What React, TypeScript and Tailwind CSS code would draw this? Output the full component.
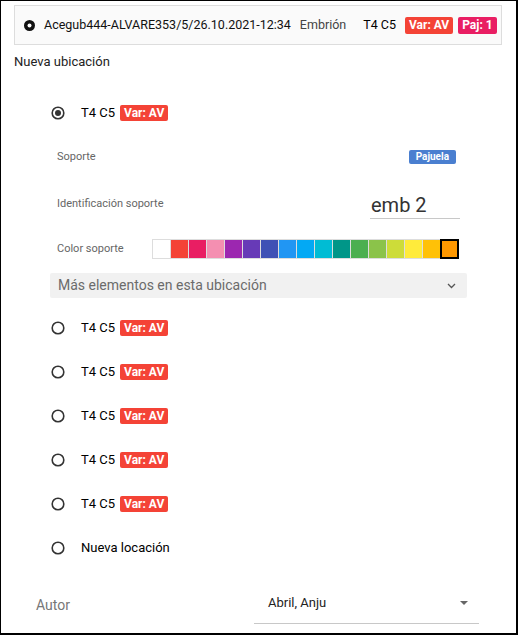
import React from "react";

const swatches = [
  "#ffffff", "#f44336", "#e91e63", "#f48fb1", "#9c27b0", "#673ab7", "#3f51b5", "#2196f3",
  "#03a9f4", "#00bcd4", "#009688", "#4caf50", "#8bc34a", "#cddc39", "#ffeb3b", "#ffc107", "#ff9800",
];

function Radio({ checked }: { checked?: boolean }) {
  return (
    <svg width="14" height="14" viewBox="0 0 14 14" className="shrink-0">
      <circle cx="7" cy="7" r="5.8" fill="none" stroke="#333" strokeWidth="1.6" />
      {checked && <circle cx="7" cy="7" r="3" fill="#333" />}
    </svg>
  );
}

function VarBadge() {
  return (
    <span className="bg-[#f44336] text-white text-[12px] font-bold leading-[16px] px-[4px] rounded-[2px]">
      Var: AV
    </span>
  );
}

function LocationRow({ checked }: { checked?: boolean }) {
  return (
    <div className="h-[44px] flex items-center pl-[1px]">
      <Radio checked={checked} />
      <span className="ml-[16px] text-[13px] text-black">T4 C5</span>
      <span className="ml-[5px] flex">
        <VarBadge />
      </span>
    </div>
  );
}

export default function App() {
  return (
    <div className="w-[518px] h-[635px] bg-white border border-black border-r-2 border-b-2 font-['Roboto',sans-serif] overflow-hidden">
      {/* Cabecera */}
      <div className="ml-[13px] mt-[4px] w-[488px] h-[40px] border border-[#dddddd] bg-[#fafafa] flex items-center pl-[9px] whitespace-nowrap">
        <svg width="11" height="11" viewBox="0 0 11 11" className="shrink-0">
          <circle cx="5.5" cy="5.5" r="5.5" fill="#111" />
          <circle cx="5.5" cy="5.5" r="2" fill="#fff" />
        </svg>
        <span className="ml-[9px] text-[12.5px] text-[#111]">Acegub444-ALVARE353/5/26.10.2021-12:34</span>
        <span className="ml-[9px] text-[12.5px] text-[#444]">Embrión</span>
        <span className="ml-[17px] text-[12.5px] text-black">T4 C5</span>
        <span className="ml-[9px] bg-[#f44336] text-white text-[12px] font-bold leading-[17px] px-[4px] rounded-[2px]">Var: AV</span>
        <span className="ml-[5px] bg-[#e91e63] text-white text-[12px] font-bold leading-[17px] px-[4px] rounded-[2px]">Paj: 1</span>
      </div>

      <div className="ml-[13px] mt-[8px] h-[18px] text-[13px] leading-[18px] text-[#222]">Nueva ubicación</div>

      <div className="ml-[49px] w-[417px] mt-[20px]">
        <LocationRow checked />

        <div className="h-[44px] flex items-center justify-between pl-[7px] pr-[11px]">
          <span className="text-[11px] text-[#666]">Soporte</span>
          <span className="bg-[#4a7fd0] text-white text-[10px] font-bold leading-[14px] px-[7px] rounded-[2px]">Pajuela</span>
        </div>

        <div className="h-[50px] flex items-center justify-between pl-[7px] pr-[7px]">
          <span className="text-[11px] text-[#666]">Identificación soporte</span>
          <div className="w-[90px] h-[30px] border-b border-[#c8c8c8] flex items-center pl-[1px] pt-[3px]">
            <span className="text-[20px] text-[#333]">emb 2</span>
          </div>
        </div>

        <div className="h-[40px] flex items-center pl-[7px]">
          <span className="w-[95px] text-[11px] text-[#666]">Color soporte</span>
          <div className="flex">
            {swatches.map((c, i) => (
              <div
                key={c}
                className={
                  i === swatches.length - 1
                    ? "w-[19px] h-[20px] border-2 border-black -ml-[1px] relative"
                    : i === 0
                    ? "w-[19px] h-[20px] border border-[#dddddd]"
                    : "w-[19px] h-[20px] border border-[#dddddd] -ml-[1px]"
                }
                style={{ backgroundColor: c }}
              />
            ))}
          </div>
        </div>

        <div className="mt-[4px] h-[25px] bg-[#f1f1f1] rounded-[2px] flex items-center justify-between pl-[8px] pr-[11px]">
          <span className="text-[14px] text-[#6b6b6b]">Más elementos en esta ubicación</span>
          <svg width="9" height="6" viewBox="0 0 9 6">
            <path d="M1 1 L4.5 4.5 L8 1" fill="none" stroke="#555" strokeWidth="1.3" />
          </svg>
        </div>

        <div className="mt-[8px]">
          <LocationRow />
          <LocationRow />
          <LocationRow />
          <LocationRow />
          <LocationRow />
          <div className="h-[44px] flex items-center pl-[1px]">
            <Radio />
            <span className="ml-[16px] text-[13px] text-black">Nueva locación</span>
          </div>
        </div>
      </div>

      <div className="ml-[35px] mt-[16px] flex items-center">
        <span className="w-[218px] text-[14px] text-[#777]">Autor</span>
        <div className="w-[225px] h-[38px] border-b border-[#c8c8c8] flex items-center justify-between pl-[14px] pr-[11px] pb-[3px]">
          <span className="text-[13px] text-[#222]">Abril, Anju</span>
          <svg width="8" height="4" viewBox="0 0 8 4">
            <path d="M0 0 L8 0 L4 4 Z" fill="#666" />
          </svg>
        </div>
      </div>
    </div>
  );
}
